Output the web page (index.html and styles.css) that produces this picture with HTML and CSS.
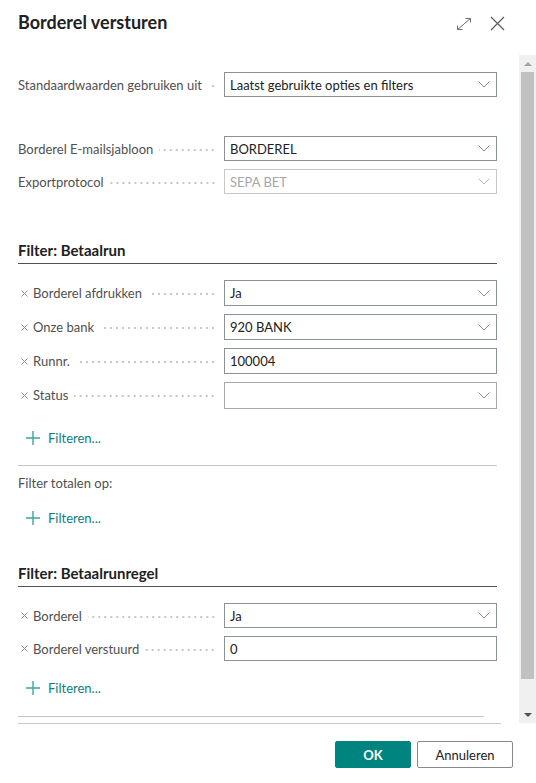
FILE: index.html
```html
<!DOCTYPE html>
<html lang="nl">
<head>
<meta charset="utf-8">
<title>Borderel versturen</title>
<link rel="stylesheet" href="styles.css">
</head>
<body>
<div class="dialog">
  <header class="head">
    <h1 class="title">Borderel versturen</h1>
    <div class="head-actions">
      <svg class="ico-expand" width="16" height="14" viewBox="0 0 16 14"><path d="M1.5 12.5 L14.5 1.5 M9.5 1.5 H14.5 V5.5 M1.5 8.5 V12.5 H6.5" fill="none" stroke="#707070" stroke-width="1"/></svg>
      <svg class="ico-close" width="15" height="15" viewBox="0 0 15 15"><path d="M1 1 L14 14 M14 1 L1 14" fill="none" stroke="#606060" stroke-width="1.3"/></svg>
    </div>
  </header>

  <div class="main">
    <div class="scroll">
      <div class="content">
        <div class="group group-first">
          <div class="row">
            <div class="label"><span class="ltext">Standaardwaarden gebruiken uit</span><span class="leader"></span></div>
            <div class="field select"><span class="val">Laatst gebruikte opties en filters</span><svg class="chev" width="12" height="7" viewBox="0 0 12 7"><path d="M0.5 0.5 L6 6 L11.5 0.5" fill="none" stroke="#8a8a8a" stroke-width="1"/></svg></div>
          </div>
        </div>

        <div class="group group-second">
          <div class="row">
            <div class="label"><span class="ltext">Borderel E-mailsjabloon</span><span class="leader"></span></div>
            <div class="field select"><span class="val">BORDEREL</span><svg class="chev" width="12" height="7" viewBox="0 0 12 7"><path d="M0.5 0.5 L6 6 L11.5 0.5" fill="none" stroke="#8a8a8a" stroke-width="1"/></svg></div>
          </div>
          <div class="row">
            <div class="label"><span class="ltext">Exportprotocol</span><span class="leader"></span></div>
            <div class="field select disabled"><span class="val">SEPA BET</span><svg class="chev" width="12" height="7" viewBox="0 0 12 7"><path d="M0.5 0.5 L6 6 L11.5 0.5" fill="none" stroke="#b8b8b8" stroke-width="1"/></svg></div>
          </div>
        </div>

        <section class="filter filter-run">
          <h2 class="fhead">Filter: Betaalrun</h2>
          <div class="rows tall">
            <div class="row">
              <div class="label"><svg class="xi" width="7" height="7" viewBox="0 0 7 7"><path d="M0.5 0.5 L6.5 6.5 M6.5 0.5 L0.5 6.5" stroke="#909090" stroke-width="1"/></svg><span class="ltext">Borderel afdrukken</span><span class="leader"></span></div>
              <div class="field select"><span class="val">Ja</span><svg class="chev" width="12" height="7" viewBox="0 0 12 7"><path d="M0.5 0.5 L6 6 L11.5 0.5" fill="none" stroke="#8a8a8a" stroke-width="1"/></svg></div>
            </div>
            <div class="row">
              <div class="label"><svg class="xi" width="7" height="7" viewBox="0 0 7 7"><path d="M0.5 0.5 L6.5 6.5 M6.5 0.5 L0.5 6.5" stroke="#909090" stroke-width="1"/></svg><span class="ltext">Onze bank</span><span class="leader"></span></div>
              <div class="field select"><span class="val">920 BANK</span><svg class="chev" width="12" height="7" viewBox="0 0 12 7"><path d="M0.5 0.5 L6 6 L11.5 0.5" fill="none" stroke="#8a8a8a" stroke-width="1"/></svg></div>
            </div>
            <div class="row">
              <div class="label"><svg class="xi" width="7" height="7" viewBox="0 0 7 7"><path d="M0.5 0.5 L6.5 6.5 M6.5 0.5 L0.5 6.5" stroke="#909090" stroke-width="1"/></svg><span class="ltext">Runnr.</span><span class="leader"></span></div>
              <div class="field"><span class="val">100004</span></div>
            </div>
            <div class="row">
              <div class="label"><svg class="xi" width="7" height="7" viewBox="0 0 7 7"><path d="M0.5 0.5 L6.5 6.5 M6.5 0.5 L0.5 6.5" stroke="#909090" stroke-width="1"/></svg><span class="ltext">Status</span><span class="leader"></span></div>
              <div class="field select light status"><span class="val"></span><svg class="chev" width="12" height="7" viewBox="0 0 12 7"><path d="M0.5 0.5 L6 6 L11.5 0.5" fill="none" stroke="#8a8a8a" stroke-width="1"/></svg></div>
            </div>
          </div>
          <a class="add add-first"><svg class="plus" width="14" height="14" viewBox="0 0 14 14"><path d="M7 0 V14 M0 7 H14" stroke="#3aa6a0" stroke-width="1.4"/></svg><span>Filteren...</span></a>
        </section>

        <hr class="sep">

        <div class="totals">Filter totalen op:</div>
        <a class="add add-totals"><svg class="plus" width="14" height="14" viewBox="0 0 14 14"><path d="M7 0 V14 M0 7 H14" stroke="#3aa6a0" stroke-width="1.4"/></svg><span>Filteren...</span></a>

        <section class="filter filter-line">
          <h2 class="fhead">Filter: Betaalrunregel</h2>
          <div class="rows">
            <div class="row">
              <div class="label"><svg class="xi" width="7" height="7" viewBox="0 0 7 7"><path d="M0.5 0.5 L6.5 6.5 M6.5 0.5 L0.5 6.5" stroke="#909090" stroke-width="1"/></svg><span class="ltext">Borderel</span><span class="leader"></span></div>
              <div class="field select"><span class="val">Ja</span><svg class="chev" width="12" height="7" viewBox="0 0 12 7"><path d="M0.5 0.5 L6 6 L11.5 0.5" fill="none" stroke="#8a8a8a" stroke-width="1"/></svg></div>
            </div>
            <div class="row">
              <div class="label"><svg class="xi" width="7" height="7" viewBox="0 0 7 7"><path d="M0.5 0.5 L6.5 6.5 M6.5 0.5 L0.5 6.5" stroke="#909090" stroke-width="1"/></svg><span class="ltext">Borderel verstuurd</span><span class="leader"></span></div>
              <div class="field"><span class="val">0</span></div>
            </div>
          </div>
          <a class="add add-line"><svg class="plus" width="14" height="14" viewBox="0 0 14 14"><path d="M7 0 V14 M0 7 H14" stroke="#3aa6a0" stroke-width="1.4"/></svg><span>Filteren...</span></a>
        </section>

        <hr class="sep sep-end">
      </div>
    </div>
    <div class="scrollbar">
      <div class="sb-btn"><span class="tri-up"></span></div>
      <div class="sb-track"><div class="sb-thumb"></div></div>
      <div class="sb-btn"><span class="tri-down"></span></div>
    </div>
  </div>

  <div class="foot-rule"></div>
  <footer class="foot">
    <button class="btn btn-ok">OK</button>
    <button class="btn btn-cancel">Annuleren</button>
  </footer>
</div>
</body>
</html>
```

FILE: styles.css
```css
* { box-sizing: border-box; }
html, body { margin: 0; padding: 0; background: #ffffff; }
body {
  font-family: Lato, "Noto Sans", "Liberation Sans", sans-serif;
  font-size: 13px;
  color: #212121;
  width: 536px;
  height: 783px;
  overflow: hidden;
}
.dialog { display: flex; flex-direction: column; height: 783px; }

.head {
  height: 55px;
  display: flex;
  align-items: flex-start;
  justify-content: space-between;
  padding: 10px 31px 0 18px;
}
.title {
  margin: 0;
  font-size: 18px;
  line-height: 24px;
  font-weight: 700;
  color: #212121;
}
.head-actions { display: flex; align-items: center; gap: 18px; padding-top: 6px; }
.ico-expand, .ico-close { display: block; }

.main { display: flex; height: 668px; }
.scroll { flex: 1; overflow: hidden; }
.content { padding: 17px 22px 0 18px; }

.row { display: flex; align-items: center; height: 25px; }
.rows, .group { display: flex; flex-direction: column; gap: 8px; }
.rows.tall .row { height: 26px; }
.group-second { margin-top: 39px; }

.label {
  width: 206px;
  flex: none;
  display: flex;
  align-items: center;
  padding-right: 8px;
  color: #505050;
  white-space: nowrap;
}
.xi { flex: none; margin: 0 5px 0 3px; }
.leader {
  flex: 1;
  height: 2px;
  margin-left: 6px;
  margin-top: 2px;
  background-image: radial-gradient(circle, #c4c4c4 0.7px, transparent 0.9px);
  background-size: 6px 2px;
  background-position: right center;
  background-repeat: repeat-x;
}
.field {
  width: 273px;
  height: 100%;
  flex: none;
  border: 1px solid #8b9199;
  display: flex;
  align-items: center;
  justify-content: space-between;
  padding: 0 6px 0 5px;
  color: #212121;
  background: #fff;
}
.field.disabled { border-color: #c8c8c8; color: #a6a6a6; }
.field.light { border-color: #a9a9a9; }
.field.status { height: 27px; }
.chev { display: block; flex: none; }

.filter-run { margin-top: 46px; }
.filter-line { margin-top: 35px; }
.fhead {
  margin: 0 0 16px 0;
  font-size: 15px;
  font-weight: 700;
  line-height: 20px;
  padding-bottom: 3px;
  border-bottom: 1px solid #505050;
  color: #212121;
}

.add {
  display: flex;
  align-items: center;
  height: 20px;
  color: #0b7f80;
  padding-left: 8px;
  gap: 8px;
  cursor: pointer;
}
.plus { display: block; }
.add-first { margin-top: 20px; }
.add-totals { margin-top: 15px; }
.add-line { margin-top: 17px; }

.sep { border: 0; border-top: 1px solid #c6c6c6; margin: 17px 0 0 0; height: 0; }
.sep-end { margin-top: 18px; margin-right: 13px; }
.totals { margin-top: 7px; line-height: 20px; color: #505050; }

.scrollbar {
  width: 17px;
  flex: none;
  background: #f0f0f0;
  display: flex;
  flex-direction: column;
}
.sb-btn { height: 17px; display: flex; align-items: center; justify-content: center; flex: none; }
.tri-up { width: 0; height: 0; border-left: 4px solid transparent; border-right: 4px solid transparent; border-bottom: 4px solid #a3a3a3; }
.tri-down { width: 0; height: 0; border-left: 4px solid transparent; border-right: 4px solid transparent; border-top: 4px solid #505050; }
.sb-track { flex: 1; padding: 0 2px; }
.sb-thumb { height: 607px; background: #c1c1c1; }

.foot-rule { height: 1px; background: #c8c8c8; margin: 0 35px 0 18px; }
.foot {
  display: flex;
  justify-content: flex-end;
  gap: 6px;
  padding: 17px 23px 0 0;
}
.btn {
  height: 27px;
  font-family: Lato, "Noto Sans", "Liberation Sans", sans-serif;
  font-size: 13px;
  border-radius: 2px;
  cursor: pointer;
}
.btn-ok { width: 76px; background: #008480; color: #fff; border: 1px solid #008480; font-weight: 700; }
.btn-cancel { width: 96px; background: #fff; color: #212121; border: 1px solid #8a8886; }
```
